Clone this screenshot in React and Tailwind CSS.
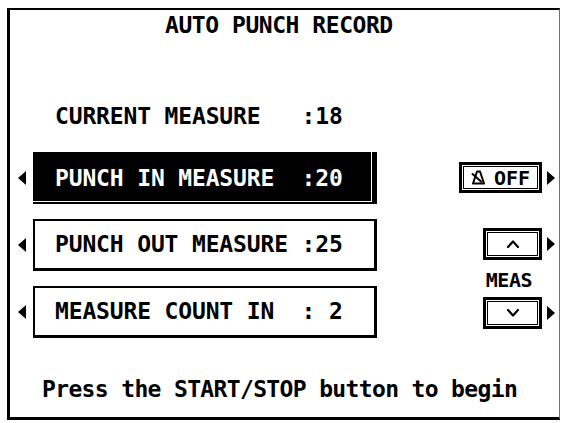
import { useState } from 'react'

const rows = [
  { label: 'PUNCH IN MEASURE  :20', active: true },
  { label: 'PUNCH OUT MEASURE :25', active: false },
  { label: 'MEASURE COUNT IN  : 2', active: false },
]

function LeftArrow() {
  return (
    <svg width="8" height="14" viewBox="0 0 8 14" className="shrink-0">
      <path d="M8 0 L0 7 L8 14 Z" fill="#000" />
    </svg>
  )
}

function RightArrow() {
  return (
    <svg width="8" height="14" viewBox="0 0 8 14" className="shrink-0">
      <path d="M0 0 L8 7 L0 14 Z" fill="#000" />
    </svg>
  )
}

function Metronome() {
  return (
    <svg width="15" height="15" viewBox="0 0 15 15">
      <path d="M6 1.5 H9 L13 13.5 H2 Z" fill="none" stroke="#000" strokeWidth="2" strokeLinejoin="round" />
      <path d="M1.5 4 L10 11.5" stroke="#000" strokeWidth="2" strokeLinecap="round" />
    </svg>
  )
}

function Chevron({ down }) {
  return (
    <svg width="16" height="10" viewBox="0 0 16 10">
      <path d={down ? 'M3 2 L8 7.5 L13 2' : 'M3 8 L8 2.5 L13 8'} fill="none" stroke="#000" strokeWidth="2.2" strokeLinecap="round" strokeLinejoin="round" />
    </svg>
  )
}

export default function App() {
  const [selected, setSelected] = useState(0)

  return (
    <div className="w-[562px] h-[423px] bg-white pt-[8px] pl-[7px] font-['DejaVu_Sans_Mono',monospace] font-bold text-black">
      <div className="w-[553px] h-[412px] border-l-[3px] border-t-2 border-b-[3px] border-r border-black border-r-gray-500 flex flex-col">
        <div className="mt-[4px] pl-[155px] text-[23px] leading-[23px] tracking-[-0.45px] whitespace-pre">AUTO PUNCH RECORD</div>

        <div className="mt-[68px] pl-[45px] text-[23px] leading-[23px] tracking-[-0.15px] whitespace-pre">CURRENT MEASURE   :18</div>

        <div className="mt-[24px] flex">
          {/* parameter rows */}
          <div className="flex flex-col gap-[15px] pl-[8px]">
            {rows.map((row, i) => (
              <div key={row.label} className="flex items-center gap-[7px]" onClick={() => setSelected(i)}>
                <LeftArrow />
                {selected === i ? (
                  <div className="w-[344px] h-[52px] bg-black text-white flex items-center pl-[22px] shadow-[inset_-5px_-2px_0_#000,inset_-6px_-3px_0_#fff]">
                    <span className="text-[23px] leading-[23px] tracking-[-0.15px] whitespace-pre">{row.label}</span>
                  </div>
                ) : (
                  <div className="w-[344px] h-[52px] bg-white border-2 border-b-[3px] border-r-[3px] border-black flex items-center pl-[20px]">
                    <span className="text-[23px] leading-[23px] tracking-[-0.15px] whitespace-pre">{row.label}</span>
                  </div>
                )}
              </div>
            ))}
          </div>

          {/* right side buttons */}
          <div className="flex-1 flex flex-col items-end pr-[4px] pt-[10px]">
            <div className="flex items-center gap-[5px]">
              <div className="w-[83px] h-[31px] border-[3px] border-black shadow-[inset_0_0_0_1px_#fff,inset_0_0_0_2px_#000] flex items-center justify-center gap-[8px]">
                <Metronome />
                <span className="text-[20px] leading-[20px]">OFF</span>
              </div>
              <RightArrow />
            </div>

            <div className="mt-[35px] flex items-center gap-[5px]">
              <div className="w-[59px] h-[32px] border-[3px] border-black shadow-[inset_0_0_0_1px_#fff,inset_0_0_0_2px_#000] flex items-center justify-center">
                <Chevron />
              </div>
              <RightArrow />
            </div>
            <div className="mt-[10px] mr-[23px] text-[20px] leading-[20px] tracking-[-0.5px]">MEAS</div>
            <div className="mt-[7px] flex items-center gap-[5px]">
              <div className="w-[59px] h-[32px] border-[3px] border-black shadow-[inset_0_0_0_1px_#fff,inset_0_0_0_2px_#000] flex items-center justify-center">
                <Chevron down />
              </div>
              <RightArrow />
            </div>
          </div>
        </div>

        <div className="mt-[40px] pl-[32px] text-[23px] leading-[23px] tracking-[-0.65px] whitespace-pre">Press the START/STOP button to begin</div>
      </div>
    </div>
  )
}
